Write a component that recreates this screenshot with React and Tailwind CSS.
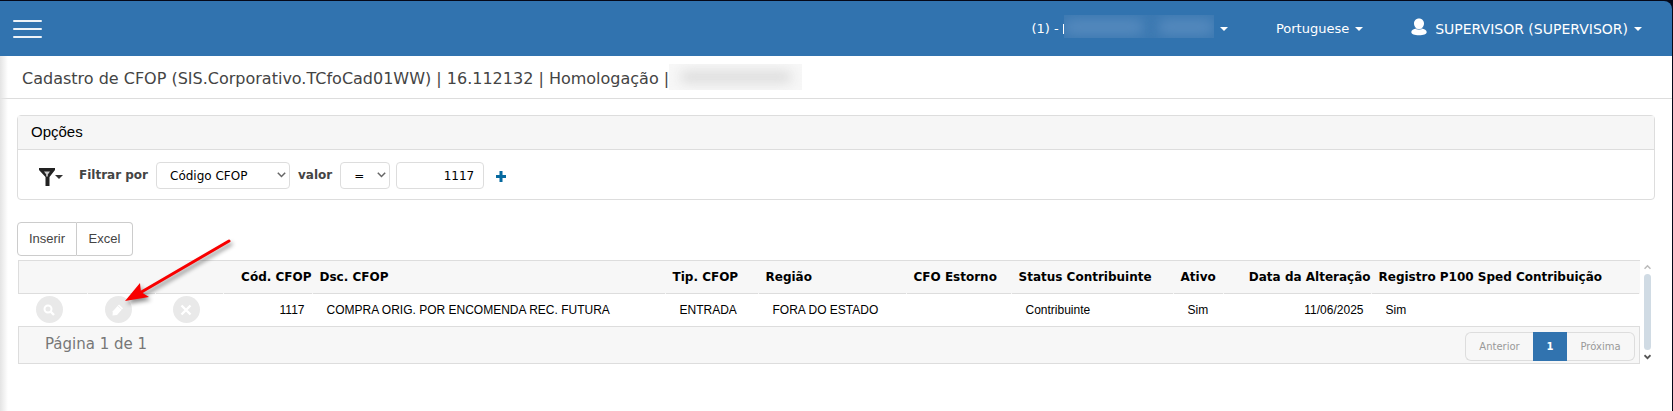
import { useState } from 'react';

const columns = [
  { key: 'codigo', title: 'Cód. CFOP', width: 'w-[89px]', align: 'right' },
  { key: 'descricao', title: 'Dsc. CFOP', width: '', align: 'left' },
  { key: 'tipo', title: 'Tip. CFOP', width: 'w-[93px]', align: 'left' },
  { key: 'regiao', title: 'Região', width: 'w-[148px]', align: 'left' },
  { key: 'estorno', title: 'CFO Estorno', width: 'w-[105px]', align: 'left' },
  { key: 'status', title: 'Status Contribuinte', width: 'w-[162px]', align: 'left' },
  { key: 'ativo', title: 'Ativo', width: 'w-[50px]', align: 'left' },
  { key: 'alteracao', title: 'Data da Alteração', width: 'w-[148px]', align: 'right' },
  { key: 'registro', title: 'Registro P100 Sped Contribuição', width: 'w-[268px]', align: 'left' },
];

const rows = [
  {
    codigo: '1117',
    descricao: 'COMPRA ORIG. POR ENCOMENDA REC. FUTURA',
    tipo: 'ENTRADA',
    regiao: 'FORA DO ESTADO',
    estorno: '',
    status: 'Contribuinte',
    ativo: 'Sim',
    alteracao: '11/06/2025',
    registro: 'Sim',
  },
];

function Caret({ className }) {
  return (
    <svg width="8" height="4" viewBox="0 0 8 4" className={className} aria-hidden="true">
      <path d="M0 0h8L4 4z" fill="currentColor" />
    </svg>
  );
}

function Chevron() {
  return (
    <svg width="9" height="6" viewBox="0 0 9 6" className="pointer-events-none absolute right-1 top-2.5" aria-hidden="true">
      <path d="M0.8 0.8l3.7 3.7 3.7-3.7" fill="none" stroke="#666" strokeWidth="1.5" />
    </svg>
  );
}

function Header() {
  return (
    <header className="flex h-[55px] items-center rounded-tr-lg bg-[#3173af] pl-[13px] pr-[30px] text-[13px] text-white">
      <button type="button" aria-label="Menu" className="flex w-[29px] flex-col gap-1.5">
        <span className="h-0.5 rounded-full bg-[#eef3f8]" />
        <span className="h-0.5 rounded-full bg-[#eef3f8]" />
        <span className="h-0.5 rounded-full bg-[#eef3f8]" />
      </button>
      <nav className="ml-auto flex items-center">
        <button type="button" aria-label="Empresa" className="flex items-center">
          <span className="whitespace-pre">(1) - </span>
          <span className="h-2.5 w-px bg-white" />
          <span className="-mt-1 flex h-[23px] w-[150px] items-center justify-between overflow-hidden bg-[#3c79b2]">
            <span className="h-4 w-20 rounded-full bg-[#5489bd] blur-[6px]" />
            <span className="h-4 w-14 rounded-full bg-[#5489bd] blur-[6px]" />
          </span>
          <Caret className="ml-1.5" />
        </button>
        <button type="button" className="ml-12 flex items-center">
          Portuguese
          <Caret className="ml-1.5" />
        </button>
        <button type="button" className="ml-12 flex items-center text-sm">
          <svg width="16" height="18" viewBox="0 0 16 18" className="-mt-1 mr-2" aria-hidden="true">
            <path
              d="M8 0.5c3 0 5 2.2 5 5 0 2-1 3.900-2.500 4.900 3 .5 5.200 1.800 5.200 3.600 0 2.200-3.200 3.300-7.700 3.300S.3 16.200.3 14c0-1.800 2.200-3.100 5.200-3.600C4 9.400 3 7.500 3 5.500c0-2.800 2-5 5-5z"
              fill="#fff"
            />
            <path d="M3.800 9.600c1.200 1.300 2.500 1.900 4.200 1.900s3-.6 4.200-1.900" fill="none" stroke="#7ba5cc" strokeWidth="0.9" />
          </svg>
          SUPERVISOR (SUPERVISOR)
          <Caret className="ml-1.5" />
        </button>
      </nav>
    </header>
  );
}

function FilterPanel() {
  const [campo, setCampo] = useState('Código CFOP');
  const [operador, setOperador] = useState('=');
  const [valor, setValor] = useState('1117');

  return (
    <section className="rounded border border-[#ddd]">
      <h2 className="h-[34px] border-b border-[#ddd] bg-[#f6f6f6] pl-[13px] font-['Liberation_Sans',sans-serif] text-[15px] leading-8">
        Opções
      </h2>
      <div className="flex h-[49px] items-center pl-[21px] pt-px text-[12px]">
        <button type="button" aria-label="Filtros" className="flex items-center text-[#333]">
          <svg width="16" height="18" viewBox="0 0 16 18" className="mt-1" aria-hidden="true">
            <path d="M0 0h16v2l-5.500 7v9h-4V9L0 2z" fill="#222" />
            <path d="M5 3.500h6L8.800 6.500v2H7.200v-2z" fill="#ccc" />
          </svg>
          <Caret className="mt-1" />
        </button>
        <label htmlFor="campo" className="ml-4 font-bold text-[#444]">
          Filtrar por
        </label>
        <div className="relative ml-2">
          <select
            id="campo"
            value={campo}
            onChange={(e) => setCampo(e.target.value)}
            className="block h-[27px] w-[134px] appearance-none rounded border border-[#ddd] bg-white pl-[13px] pt-0.5"
          >
            <option>Código CFOP</option>
          </select>
          <Chevron />
        </div>
        <label htmlFor="operador" className="ml-2 font-bold text-[#444]">
          valor
        </label>
        <div className="relative ml-2">
          <select
            id="operador"
            value={operador}
            onChange={(e) => setOperador(e.target.value)}
            className="block h-[27px] w-[50px] appearance-none rounded border border-[#ddd] bg-white pl-[13px] pt-0.5"
          >
            <option>=</option>
          </select>
          <Chevron />
        </div>
        <input
          aria-label="Valor do filtro"
          value={valor}
          onChange={(e) => setValor(e.target.value)}
          className="ml-1.5 h-[27px] w-[88px] rounded border border-[#ddd] pr-[9px] pt-0.5 text-right"
        />
        <button type="button" aria-label="Adicionar filtro" className="ml-3 mt-0.5">
          <svg width="10" height="11" viewBox="0 0 10 11" aria-hidden="true">
            <path d="M5 0v11M0 5.500h10" stroke="#06699f" strokeWidth="3" />
          </svg>
        </button>
      </div>
    </section>
  );
}

function ActionButton({ label, children }) {
  return (
    <button type="button" aria-label={label} className="ml-[17px] flex size-[27px] items-center justify-center rounded-full bg-[#e9e9e9]">
      <svg width="14" height="14" viewBox="0 0 14 14" fill="none" stroke="#fff" aria-hidden="true">
        {children}
      </svg>
    </button>
  );
}

function CfopTable() {
  return (
    <table className="w-full table-fixed border-collapse text-left text-black">
      <colgroup>
        <col className="w-[69px]" />
        <col className="w-[68px]" />
        <col className="w-[68px]" />
        {columns.map((c) => (
          <col key={c.key} className={c.width} />
        ))}
      </colgroup>
      <thead className="border-l border-t border-[#ddd] bg-[#f7f7f7]">
        <tr>
          {['visualizar', 'editar', 'excluir'].map((acao) => (
            <td key={acao} className="p-0">
              <div className="mr-px h-[33px] border-b border-[#ddd]" />
            </td>
          ))}
          {columns.map((c) => (
            <th key={c.key} className="whitespace-nowrap p-0 text-[12px] font-bold">
              <div className={`mr-px h-[33px] border-b border-[#ddd] pl-[7px] leading-8 ${c.align === 'right' ? 'text-right' : ''}`}>
                {c.title}
              </div>
            </th>
          ))}
        </tr>
      </thead>
      <tbody>
        {rows.map((row) => (
          <tr key={row.codigo} className="h-8 font-['Liberation_Sans',sans-serif] text-[12px]">
            <td className="p-0">
              <ActionButton label="Visualizar">
                <circle cx="6" cy="6" r="3.500" strokeWidth="2" />
                <path d="M8.500 8.500l3.500 3.500" strokeWidth="2.400" />
              </ActionButton>
            </td>
            <td className="p-0">
              <ActionButton label="Editar">
                <path d="M1.500 12.500l.3-4.300L8 1.500l4 3.800L6 12z" fill="#fff" stroke="none" />
                <path d="M6.800 2.800l4 3.800" stroke="#e9e9e9" strokeWidth="0.7" />
              </ActionButton>
            </td>
            <td className="p-0">
              <ActionButton label="Excluir">
                <path d="M2.500 2.500l9 9M11.500 2.500l-9 9" strokeWidth="2.400" />
              </ActionButton>
            </td>
            {columns.map((c) => (
              <td key={c.key} className={`whitespace-nowrap py-0 ${c.align === 'right' ? 'pr-2 text-right' : 'pl-3.5'}`}>
                {row[c.key]}
              </td>
            ))}
          </tr>
        ))}
      </tbody>
      <tfoot className="border border-[#ddd] bg-[#f7f7f7]">
        <tr>
          <td colSpan={12} className="p-0">
            <div className="flex h-[36px] items-center justify-between pl-[26px] pr-1">
              <span className="text-[15px] text-[#777]">Página 1 de 1</span>
              <nav aria-label="Paginação" className="mt-1 flex h-[29px] text-[10px] text-[#999]">
                <button type="button" className="w-[68px] rounded-l-md border border-r-0 border-[#ddd]">
                  Anterior
                </button>
                <button type="button" className="w-[34px] bg-[#3173af] font-bold text-white">
                  1
                </button>
                <button type="button" className="w-[68px] rounded-r-md border border-l-0 border-[#ddd]">
                  Próxima
                </button>
              </nav>
            </div>
          </td>
        </tr>
      </tfoot>
    </table>
  );
}

function ScrollBar() {
  return (
    <div className="flex w-[7px] shrink-0 flex-col items-center gap-1 pb-1 pt-1" aria-hidden="true">
      <svg width="7" height="6" viewBox="0 0 7 6">
        <path d="M0.500 4.800l3-3 3 3" fill="none" stroke="#bbb" strokeWidth="1.600" />
      </svg>
      <div className="w-[7px] flex-1 rounded-full bg-[#d0dbe4]" />
      <svg width="7" height="6" viewBox="0 0 7 6">
        <path d="M0.500 1.200l3 3 3-3" fill="none" stroke="#555" strokeWidth="1.800" />
      </svg>
    </div>
  );
}

export default function App() {
  return (
    <div className="flex min-h-screen flex-col bg-[#050818] pr-px pt-px font-['DejaVu_Sans',sans-serif]">
      <Header />
      <main className="relative flex-1 bg-white">
        {/* Shadow of the collapsed side menu */}
        <div className="absolute inset-y-0 left-0 w-2 bg-gradient-to-r from-[#e4e4e4] to-transparent" />

        <div className="flex h-[43px] items-center border-b border-[#ddd] pl-[22px]">
          <h1 className="whitespace-pre pt-[3px] text-base text-[#444]">
            Cadastro de CFOP (SIS.Corporativo.TCfoCad01WW) | 16.112132 | Homologação |
          </h1>
          <span className="flex h-[26px] w-[133px] items-center justify-around overflow-hidden bg-[#f7f7f7]">
            <span className="h-3 w-28 rounded-full bg-[#dcdcdc] blur-[6px]" />
          </span>
        </div>

        <div className="pl-[17px] pr-[17px] pt-4">
          <FilterPanel />

          <div className="mt-[22px] flex font-['Liberation_Sans',sans-serif] text-[13px] text-[#444]">
            <button type="button" className="h-[34px] w-[60px] rounded-l border border-[#ccc]">
              Inserir
            </button>
            <button type="button" className="h-[34px] w-[56px] rounded-r border border-l-0 border-[#ccc]">
              Excel
            </button>
          </div>

          <div className="relative ml-px mr-1 mt-1 flex gap-1">
            <CfopTable />
            <ScrollBar />
            {/* Arrow that points at the edit button */}
            <svg
              width="116"
              height="72"
              viewBox="0 0 116 72"
              className="pointer-events-none absolute -top-6 left-[102px] drop-shadow-[2px_3px_2px_rgba(0,0,0,0.45)]"
              aria-hidden="true"
            >
              <path d="M109 5L18 58" stroke="#f80000" strokeWidth="3" strokeLinecap="round" />
              <path d="M5 65L20 47l1 9 8 5z" fill="#f80000" />
            </svg>
          </div>
        </div>
      </main>
    </div>
  );
}
